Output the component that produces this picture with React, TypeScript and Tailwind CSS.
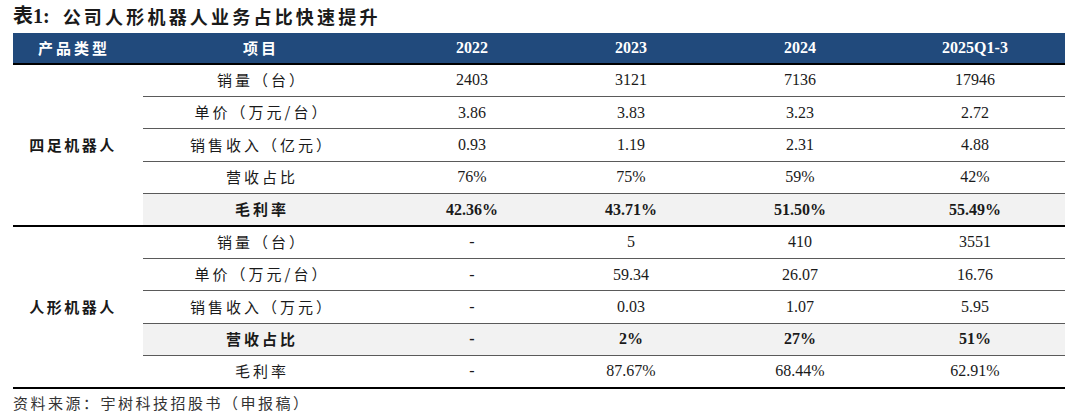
import React from "react";

type Row = { item: string; vals: string[]; bold?: boolean };

const groups: { name: string; rows: Row[] }[] = [
  {
    name: "四足机器人",
    rows: [
      { item: "销量（台）", vals: ["2403", "3121", "7136", "17946"] },
      { item: "单价（万元/台）", vals: ["3.86", "3.83", "3.23", "2.72"] },
      { item: "销售收入（亿元）", vals: ["0.93", "1.19", "2.31", "4.88"] },
      { item: "营收占比", vals: ["76%", "75%", "59%", "42%"] },
      { item: "毛利率", vals: ["42.36%", "43.71%", "51.50%", "55.49%"], bold: true },
    ],
  },
  {
    name: "人形机器人",
    rows: [
      { item: "销量（台）", vals: ["-", "5", "410", "3551"] },
      { item: "单价（万元/台）", vals: ["-", "59.34", "26.07", "16.76"] },
      { item: "销售收入（万元）", vals: ["-", "0.03", "1.07", "5.95"] },
      { item: "营收占比", vals: ["-", "2%", "27%", "51%"], bold: true },
      { item: "毛利率", vals: ["-", "87.67%", "68.44%", "62.91%"] },
    ],
  },
];

const cn = "font-['Noto_Sans_CJK_SC',sans-serif]";
const num = "font-['Liberation_Serif','Noto_Sans_CJK_SC',serif]";

export default function App() {
  return (
    <div className="w-[1080px] h-[417px] bg-white text-[#1a1a1a] overflow-hidden">
      <div className="h-[33px] pl-[13px] pt-[3px] flex items-start">
        <span className={`${num} text-[20px] font-bold leading-[26px]`}>表1:</span>
        <span className={`${cn} text-[18px] font-bold leading-[26px] ml-[13px] tracking-[3.2px]`}>
          公司人形机器人业务占比快速提升
        </span>
      </div>
      <table className="ml-[13px] w-[1052px] border-collapse table-fixed">
        <colgroup>
          <col className="w-[130px]" />
          <col className="w-[254px]" />
          <col className="w-[150px]" />
          <col className="w-[168px]" />
          <col className="w-[170px]" />
          <col className="w-[180px]" />
        </colgroup>
        <thead>
          <tr className="bg-[#214a7c] text-white h-[31px] border-b-2 border-black">
            <th className={`${cn} text-[15px] font-bold tracking-[3px] pr-[8px]`}>产品类型</th>
            <th className={`${cn} text-[15px] font-bold tracking-[3px] pr-[18px]`}>项目</th>
            {["2022", "2023", "2024", "2025Q1-3"].map((y) => (
              <th key={y} className={`${num} text-[16px] font-bold`}>
                {y}
              </th>
            ))}
          </tr>
        </thead>
        <tbody>
          {groups.map((g) =>
            g.rows.map((r, i) => {
              const last = i === g.rows.length - 1;
              const line = last ? "border-b-2 border-black" : "border-b-[1.5px] border-[#5a5a5a]";
              return (
                <tr key={g.name + r.item} className={`h-[32.4px] ${r.bold ? "bg-[#f2f2f2]" : ""}`}>
                  {i === 0 && (
                    <td
                      rowSpan={g.rows.length}
                      className={`${cn} bg-white text-center text-[15px] font-bold tracking-[2.5px] pr-[10px] border-b-2 border-black`}
                    >
                      {g.name}
                    </td>
                  )}
                  <td
                    className={`${cn} text-center text-[15px] tracking-[3px] pr-[16px] ${r.bold ? "font-bold" : ""} ${line}`}
                  >
                    {r.item}
                  </td>
                  {r.vals.map((v, j) => (
                    <td key={j} className={`${num} text-center text-[16px] ${r.bold ? "font-bold" : ""} ${line}`}>
                      {v}
                    </td>
                  ))}
                </tr>
              );
            })
          )}
        </tbody>
      </table>
      <div className={`${cn} pl-[13px] pt-[3px] text-[15px] text-[#333] tracking-[2.5px]`}>
        资料来源：宇树科技招股书（申报稿）
      </div>
    </div>
  );
}
